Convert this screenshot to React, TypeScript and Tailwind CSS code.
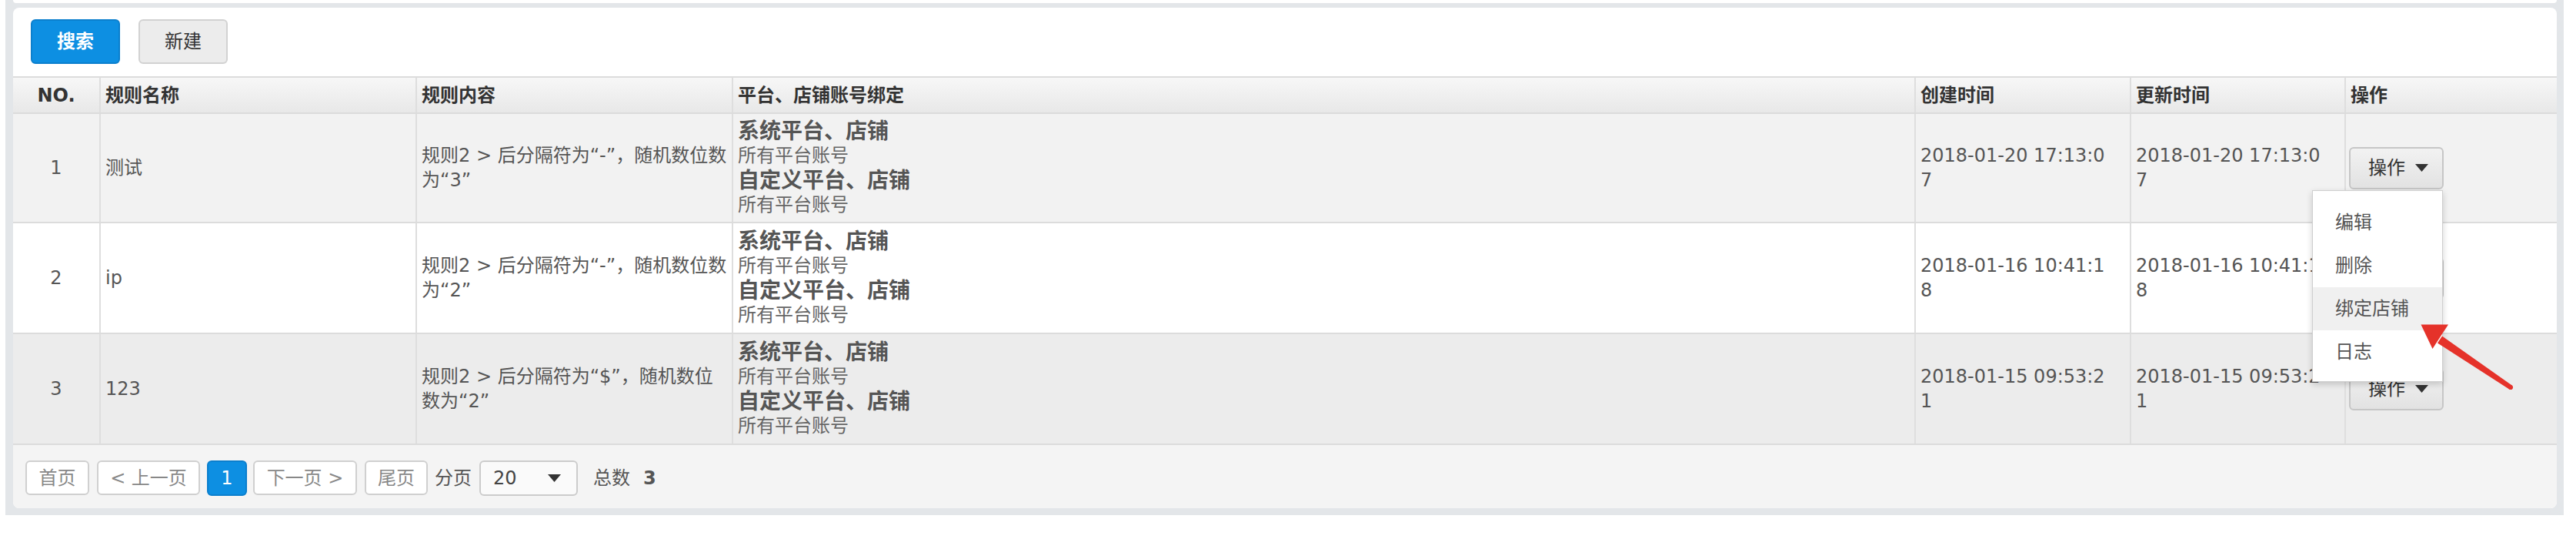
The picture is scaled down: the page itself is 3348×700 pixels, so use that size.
import React from "react";

const COLS = "grid grid-cols-[112px_411px_411px_1537px_280px_279px_1fr]";
const CELL = "flex items-center border-l-2 border-[#dedede] pl-[6px]";

function Caret({ className }: { className?: string }) {
  return (
    <svg className={className} width="17" height="10" viewBox="0 0 17 10">
      <polygon points="0,0 17,0 8.5,10" fill="#333" />
    </svg>
  );
}

function OpButton() {
  return (
    <div className="flex h-[55px] w-[123px] items-center rounded-[6px] border-2 border-[#c6c6c6] bg-linear-to-b from-[#f2f2f2] to-[#e2e2e2] pl-[23px] text-[24px] text-[#333]">
      <span>操作</span>
      <Caret className="ml-[13px]" />
    </div>
  );
}

function Platform() {
  return (
    <div>
      <div className="text-[28px] font-bold leading-[33px] text-[#555]">系统平台、店铺</div>
      <div className="text-[24px] leading-[31px] text-[#666]">所有平台账号</div>
      <div className="text-[28px] font-bold leading-[33px] text-[#555]">自定义平台、店铺</div>
      <div className="text-[24px] leading-[31px] text-[#666]">所有平台账号</div>
    </div>
  );
}

type Row = {
  no: string;
  name: string;
  c1: string;
  c2: string;
  d1: string;
  d2: string;
  bg: string;
  h: string;
};

const rows: Row[] = [
  {
    no: "1",
    name: "测试",
    c1: "规则2 > 后分隔符为“-”，随机数位数",
    c2: "为“3”",
    d1: "2018-01-20 17:13:0",
    d2: "7",
    bg: "bg-[#f2f2f2]",
    h: "h-[142px]",
  },
  {
    no: "2",
    name: "ip",
    c1: "规则2 > 后分隔符为“-”，随机数位数",
    c2: "为“2”",
    d1: "2018-01-16 10:41:1",
    d2: "8",
    bg: "bg-white",
    h: "h-[144px]",
  },
  {
    no: "3",
    name: "123",
    c1: "规则2 > 后分隔符为“$”，随机数位",
    c2: "数为“2”",
    d1: "2018-01-15 09:53:2",
    d2: "1",
    bg: "bg-[#ececec]",
    h: "h-[144px]",
  },
];

function Menu() {
  const items = ["编辑", "删除", "绑定店铺", "日志"];
  return (
    <div className="absolute right-[1px] top-full z-20 mt-[1px] w-[170px] border border-[#cfcfcf] bg-white pb-[10px] pt-[13px] shadow-[0_3px_8px_rgba(0,0,0,0.18)]">
      {items.map((t, i) => (
        <div
          key={t}
          className={`flex h-[56px] items-center pl-[29px] text-[24px] text-[#555] ${i === 2 ? "bg-[#f0f0f0]" : ""}`}
        >
          {t}
        </div>
      ))}
    </div>
  );
}

function PBtn({ w, children, ml }: { w: string; children: React.ReactNode; ml: string }) {
  return (
    <div
      className={`flex h-[45px] items-center justify-center rounded-[6px] border-2 border-[#d0d0d0] bg-white text-[24px] text-[#888] ${w} ${ml}`}
    >
      {children}
    </div>
  );
}

export default function App() {
  return (
    <div className="relative h-[700px] w-[3348px] overflow-hidden bg-white font-['DejaVu_Sans','Noto_Sans_CJK_SC',sans-serif]">
      <div className="ml-[7px] w-[3325px] bg-[#e3e6e9] pb-[9px] pl-[10px] pr-[9px]">
        <div className="h-[4px] rounded-b-[6px] bg-white" />
        <div className="mt-[6px] overflow-visible rounded-[8px] bg-white">
          {/* toolbar */}
          <div className="flex h-[89px] items-start pl-[23px] pt-[15px]">
            <div className="flex h-[58px] w-[116px] items-center justify-center rounded-[6px] border-2 border-[#0b7fcd] bg-[#0d8fe2] text-[24px] font-bold text-white">
              搜索
            </div>
            <div className="ml-[24px] flex h-[58px] w-[116px] items-center justify-center rounded-[6px] border-2 border-[#d2d2d2] bg-[#ececec] text-[24px] text-[#333]">
              新建
            </div>
          </div>

          {/* header */}
          <div className={`${COLS} h-[49px] border-y-2 border-[#dcdcdc] bg-linear-to-b from-[#f7f7f7] to-[#e8e8e8] text-[24px] font-bold text-[#333]`}>
            <div className="flex items-center justify-center">NO.</div>
            <div className={CELL}>规则名称</div>
            <div className={CELL}>规则内容</div>
            <div className={CELL}>平台、店铺账号绑定</div>
            <div className={CELL}>创建时间</div>
            <div className={CELL}>更新时间</div>
            <div className={CELL}>操作</div>
          </div>

          {/* rows */}
          {rows.map((r, i) => (
            <div key={r.no} className={`${COLS} ${r.h} ${r.bg} border-b-2 border-[#dcdcdc] text-[24px] text-[#555]`}>
              <div className="flex items-center justify-center">{r.no}</div>
              <div className={CELL}>{r.name}</div>
              <div className={CELL}>
                <div className="leading-[32px]">
                  {r.c1}
                  <br />
                  {r.c2}
                </div>
              </div>
              <div className={CELL}>
                <Platform />
              </div>
              <div className={CELL}>
                <div className="leading-[32px]">
                  {r.d1}
                  <br />
                  {r.d2}
                </div>
              </div>
              <div className={CELL}>
                <div className="leading-[32px]">
                  {r.d1}
                  <br />
                  {r.d2}
                </div>
              </div>
              <div className="flex items-center border-l-2 border-[#dedede] pl-[4px]">
                <div className="relative">
                  <OpButton />
                  {i === 0 && <Menu />}
                </div>
              </div>
            </div>
          ))}

          {/* pagination */}
          <div className="flex h-[82px] items-start rounded-b-[8px] bg-[#f4f4f4] pl-[16px] pt-[20px] text-[24px]">
            <PBtn w="w-[83px]" ml="">首页</PBtn>
            <PBtn w="w-[134px]" ml="ml-[10px]">&lt; 上一页</PBtn>
            <div className="ml-[9px] flex h-[46px] w-[52px] items-center justify-center rounded-[6px] border-2 border-[#0b7fcd] bg-[#0d8fe2] text-[24px] text-white">
              1
            </div>
            <PBtn w="w-[135px]" ml="ml-[8px]">下一页 &gt;</PBtn>
            <PBtn w="w-[82px]" ml="ml-[10px]">尾页</PBtn>
            <div className="ml-[9px] flex h-[45px] items-center text-[#555]">分页</div>
            <div className="ml-[10px] flex h-[46px] w-[128px] items-center rounded-[6px] border-2 border-[#cccccc] bg-[#fafafa] pl-[16px] text-[#444]">
              <span>20</span>
              <Caret className="ml-[40px]" />
            </div>
            <div className="ml-[20px] flex h-[45px] items-center text-[#555]">总数</div>
            <div className="ml-[17px] flex h-[45px] items-center font-bold text-[#555]">3</div>
          </div>
        </div>
      </div>

      {/* red annotation arrow */}
      <svg className="absolute left-[3140px] top-[410px] z-30" width="135" height="100" viewBox="0 0 135 100">
        <polygon points="28,35.5 121.2,95.6 124.8,90.4 34,26.5" fill="#e5322a" />
        <circle cx="123" cy="93" r="3.1" fill="#e5322a" />
        <polygon points="6.5,11.5 42,11.5 21.5,43" fill="#e5322a" />
      </svg>
    </div>
  );
}
